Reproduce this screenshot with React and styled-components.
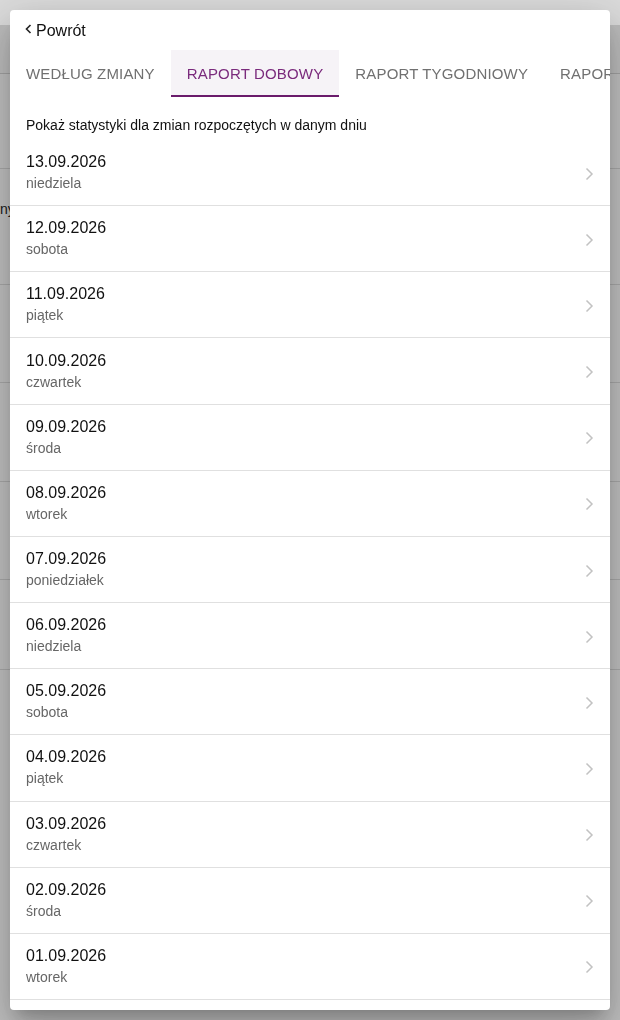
import styled, { createGlobalStyle } from "styled-components";

const days = [
    { date: "13.09.2026", day: "niedziela" },
    { date: "12.09.2026", day: "sobota" },
    { date: "11.09.2026", day: "piątek" },
    { date: "10.09.2026", day: "czwartek" },
    { date: "09.09.2026", day: "środa" },
    { date: "08.09.2026", day: "wtorek" },
    { date: "07.09.2026", day: "poniedziałek" },
    { date: "06.09.2026", day: "niedziela" },
    { date: "05.09.2026", day: "sobota" },
    { date: "04.09.2026", day: "piątek" },
    { date: "03.09.2026", day: "czwartek" },
    { date: "02.09.2026", day: "środa" },
    { date: "01.09.2026", day: "wtorek" },
];

const tabs = ["Według zmiany", "Raport dobowy", "Raport tygodniowy", "Raport miesięczny"];

// rows of the page lying under the dialog (heights in px)
const backRows = [95, 116, 98, 99, 98, 90];

export default function App() {
    return (
        <>
            <GlobalStyle />
            <UnderPage>
                <UnderHeader />
                <UnderToolbar />
                {backRows.map((h, i) =>
                    <UnderRow key={i} $h={h}>
                        {i === 1 && <UnderLabel>ny</UnderLabel>}
                    </UnderRow>)}
            </UnderPage>
            <Overlay>
                <Dialog>
                    <BackBar>
                        <svg width="7" height="11" viewBox="0 0 7 11">
                            <path d="M5.5 1 L1.5 5 L5.5 9" fill="none" stroke="#222" strokeWidth="1.6" />
                        </svg>
                        Powrót
                    </BackBar>
                    <TabBar>
                        {tabs.map((t, i) =>
                            <Tab key={t} $active={i === 1}>{t}</Tab>)}
                    </TabBar>
                    <Hint>Pokaż statystyki dla zmian rozpoczętych w danym dniu</Hint>
                    <List>
                        {days.map(d =>
                            <Row key={d.date}>
                                <RowText>
                                    <DateText>{d.date}</DateText>
                                    <DayText>{d.day}</DayText>
                                </RowText>
                                <svg width="9" height="14" viewBox="0 0 9 14">
                                    <path d="M1.5 1.5 L7 7 L1.5 12.5" fill="none" stroke="#c2c2c2" strokeWidth="1.5" />
                                </svg>
                            </Row>)}
                    </List>
                </Dialog>
            </Overlay>
        </>
    )
}

const GlobalStyle = createGlobalStyle`
body {
    margin: 0;
    font-family: "Liberation Sans", Arial, sans-serif;
    background: #e0e0e0;
    overflow: hidden;
}
`

const UnderPage = styled.div`
height: 1020px;
background: #e0e0e0;
`

const UnderHeader = styled.div`
height: 25px;
background: #ffffff;
`

const UnderToolbar = styled.div`
height: 48px;
background: #dcdcdc;
border-bottom: 1px solid #bcbcbc;
`

const UnderRow = styled.div`
height: ${p => p.$h - 1}px;
border-bottom: 1px solid #c4c4c4;
display: flex;
align-items: center;
`

const UnderLabel = styled.span`
font-size: 14px;
color: #222;
margin-top: -36px;
`

const Overlay = styled.div`
position: fixed;
inset: 0;
background: rgba(0, 0, 0, 0.14);
padding: 10px;
`

const Dialog = styled.div`
width: 600px;
height: 1000px;
background: #fff;
border-radius: 4px;
box-shadow: 0 11px 15px -7px rgba(0,0,0,.2), 0 24px 38px 3px rgba(0,0,0,.14), 0 9px 46px 8px rgba(0,0,0,.12);
display: flex;
flex-direction: column;
overflow: hidden;
`

const BackBar = styled.div`
height: 40px;
flex-shrink: 0;
display: flex;
align-items: center;
gap: 4px;
padding: 2px 0 0 15px;
box-sizing: border-box;
font-size: 16px;
color: #111;

svg {
    margin-top: -3px;
}
`

const TabBar = styled.div`
display: flex;
height: 47px;
flex-shrink: 0;
overflow: hidden;
`

const Tab = styled.div`
flex-shrink: 0;
box-sizing: border-box;
height: 47px;
padding: 2px 16px 0;
display: flex;
align-items: center;
font-size: 15px;
letter-spacing: 0.16px;
text-transform: uppercase;
white-space: nowrap;
color: ${p => p.$active ? "#7a2a7c" : "#707070"};
background: ${p => p.$active ? "#f6f3f7" : "transparent"};
border-bottom: 2px solid ${p => p.$active ? "#6a1b6b" : "transparent"};
`

const Hint = styled.div`
flex-shrink: 0;
padding: 19px 16px 6px;
line-height: 18px;
font-size: 14px;
color: #111;
`

const List = styled.div`
display: flex;
flex-direction: column;
`

const Row = styled.div`
box-sizing: border-box;
height: 66.17px;
flex-shrink: 0;
padding: 0 16px;
border-bottom: 1px solid #e0e0e0;
display: flex;
align-items: center;
justify-content: space-between;

svg {
    margin-top: 2px;
}
`

const RowText = styled.div`
display: flex;
flex-direction: column;
margin-top: -1px;
`

const DateText = styled.span`
font-size: 16px;
line-height: 22px;
color: #111;
`

const DayText = styled.span`
font-size: 14px;
line-height: 20px;
color: #666;
`
